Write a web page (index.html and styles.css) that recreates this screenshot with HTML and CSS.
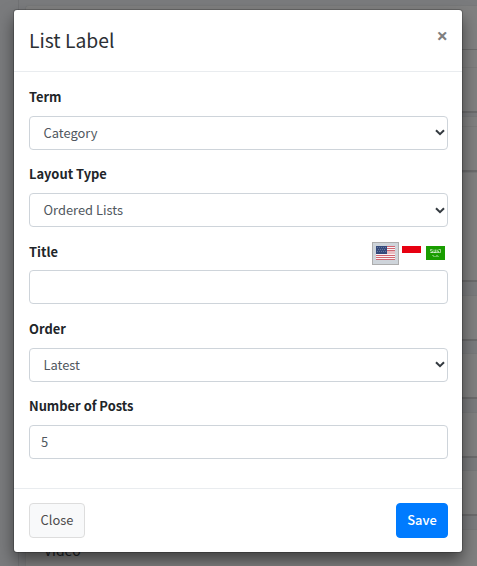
FILE: index.html
```html
<!DOCTYPE html>
<html lang="en">
<head>
<meta charset="utf-8">
<title>List Label</title>
<link rel="stylesheet" href="styles.css">
</head>
<body>
<div class="page" aria-hidden="true">
  <div class="panel">
    <div class="card card-top"><div class="card-head"></div><div class="card-sub"></div></div>
    <div class="card card-second"><div class="card-line"></div></div>
    <div class="card card-third"></div>
    <div class="card card-item"></div>
    <div class="card card-item"></div>
    <div class="card card-item"></div>
    <div class="card card-item"></div>
    <div class="card card-last">Video</div>
  </div>
</div>
<div class="backdrop">
  <div class="modal" role="dialog">
    <header class="modal-header">
      <h4 class="modal-title">List Label</h4>
      <button class="dismiss" aria-label="Close"><span>×</span></button>
    </header>
    <div class="modal-body">
      <div class="group">
        <label class="label">Term</label>
        <div class="control select"><span>Category</span><svg class="chevron" viewBox="0 0 10 7"><path d="M1 1.2 5 5.2 9 1.2"/></svg></div>
      </div>
      <div class="group">
        <label class="label">Layout Type</label>
        <div class="control select"><span>Ordered Lists</span><svg class="chevron" viewBox="0 0 10 7"><path d="M1 1.2 5 5.2 9 1.2"/></svg></div>
      </div>
      <div class="group">
        <div class="label-row">
          <label class="label label-low">Title</label>
          <div class="flags">
            <span class="flag-button active">
              <svg class="flag" viewBox="0 0 19 14" shape-rendering="crispEdges"><path fill="#fbf3f4" d="M0 0h19v14H0z"/><path stroke="#cf6672" stroke-width="1" d="M0 .5h19M0 2.5h19M0 4.500h19M0 9.500h19M0 11.500h19M0 13.500h19"/><path fill="#e8bcc1" d="M11 5h8v3h-8z"/><path fill="#344a7c" d="M0 0h11v8H0z"/><path stroke="#66769d" stroke-width="1" stroke-dasharray="1 1" d="M1 1.500h9M2 3.500h8M1 5.500h9"/></svg>
            </span>
            <svg class="flag" viewBox="0 0 19 14"><path fill="#fff" d="M0 0h19v14H0z"/><path fill="#e70011" d="M0 0h19v7H0z"/></svg>
            <svg class="flag flag-last" viewBox="0 0 19 14"><path fill="#199d00" d="M0 0h19v14H0z"/><path fill="none" stroke="#fff" stroke-opacity=".6" stroke-width=".9" d="M4.500 3.500h2M4.500 3.500v1.500h2v1.500h-2M8 3.500v3h1.500v-3M11 6.500v-3M11 5h1.500v1.500M12.500 3.500h2v3M4.500 6.500h10"/><path stroke="#fff" stroke-opacity=".5" stroke-width=".7" d="M6 9.500h2M7 10.500h6M10 9.500h2"/></svg>
          </div>
        </div>
        <div class="control"></div>
      </div>
      <div class="group">
        <label class="label label-low">Order</label>
        <div class="control select"><span>Latest</span><svg class="chevron" viewBox="0 0 10 7"><path d="M1 1.2 5 5.2 9 1.2"/></svg></div>
      </div>
      <div class="group">
        <label class="label">Number of Posts</label>
        <div class="control">5</div>
      </div>
    </div>
    <footer class="modal-footer">
      <button class="btn btn-light">Close</button>
      <button class="btn btn-primary">Save</button>
    </footer>
  </div>
</div>
</body>
</html>
```
FILE: styles.css
```css
* { box-sizing: border-box; }
html, body { height: 100%; overflow: hidden; }
body {
  margin: 0;
  font: 12.9px/21px "Noto Sans CJK SC", sans-serif;
  color: #212529;
  background: #7a7b7d;
}
.page { height: 566px; overflow: hidden; padding-left: 18px; }
.panel { border-left: 1px solid #717274; padding: 5px 0 0 6px; height: 600px; }
.card {
  background: #808080;
  border: 1px solid #777879;
  border-right: 0;
  border-bottom: 2px solid #6b6b6c;
  border-radius: 4px 0 0 4px;
  margin-bottom: 12.5px;
}
.card-top { height: 108px; margin-bottom: 3px; }
.card-head { height: 44px; border-bottom: 1px solid #6c6c6c; }
.card-sub { height: 18px; border-bottom: 1px solid #7a7a7a; }
.card-second { height: 56px; margin-bottom: 0; }
.card-line { height: 10px; border-bottom: 1px solid #7a7a7a; }
.card-third { height: 110px; }
.card-item { height: 46px; }
.card-last { height: 60px; padding: 10px 0 0 18px; font-size: 14px; }
.backdrop { position: absolute; inset: 0; padding: 10px 15px 0 14px; }
.modal {
  height: 542px;
  background: #fff;
  border-radius: 3px;
  box-shadow: 0 0 0 1px rgba(0, 0, 0, .2), 0 8px 16px rgba(0, 0, 0, .5);
  display: flex;
  flex-direction: column;
}
.modal-header {
  height: 62px;
  padding: 14px 14px 15px 15px;
  border-bottom: 1px solid #e9ecef;
  display: flex;
  justify-content: space-between;
}
.modal-title { margin: 1px 0 0; font-size: 19.3px; line-height: 31px; font-weight: 400; color: #2c3034; }
.dismiss {
  border: 0;
  padding: 0;
  margin-top: 1px;
  height: 22px;
  background: none;
  color: #7f7f7f;
  font: 700 20px/22px "Open Sans", sans-serif;
}
.modal-body { flex: 1; padding: 14.6px 14px 0 15px; }
.group { height: 77.25px; }
.label { display: block; height: 21.25px; line-height: 20.5px; font-weight: 700; }
.label-low { line-height: 21.5px; }
.label-row { display: flex; justify-content: space-between; height: 21.25px; }
.control {
  height: 34px;
  margin-top: 8px;
  padding: 0 11px;
  border: 1px solid #ced4da;
  border-radius: 4px;
  color: #50575e;
  line-height: 32px;
  display: flex;
  align-items: center;
}
.select { justify-content: space-between; padding: 0 2px 0 13.5px; }
.chevron { width: 10px; height: 7px; fill: none; stroke: #343a40; stroke-width: 2; }
.flags { display: flex; align-items: flex-start; height: 21px; padding: 1px 3px 0 0; }
.flag-button {
  width: 27px;
  height: 23px;
  margin: 0 3px 0 0;
  padding: 3px;
  background: #ced4da;
  border: 1px solid #adadad;
  display: flex;
}
.flag { width: 19px; height: 14px; margin-top: 4px; flex: none; }
.flag-button .flag { margin-top: 0; }
.flag-last { margin-left: 5px; }
.modal-footer {
  height: 64px;
  padding: 14px 14px 0 15px;
  border-top: 1px solid #e9ecef;
  display: flex;
  justify-content: space-between;
}
.btn { height: 35px; padding: 0 0 2px; border-radius: 4px; font: inherit; }
.btn-light { width: 56px; background: #f8f9fa; border: 1px solid #ddd; color: #4c4c4c; }
.btn-primary { width: 52px; background: #007bff; border: 1px solid #007bff; color: #fff; font-weight: 500; }
```
